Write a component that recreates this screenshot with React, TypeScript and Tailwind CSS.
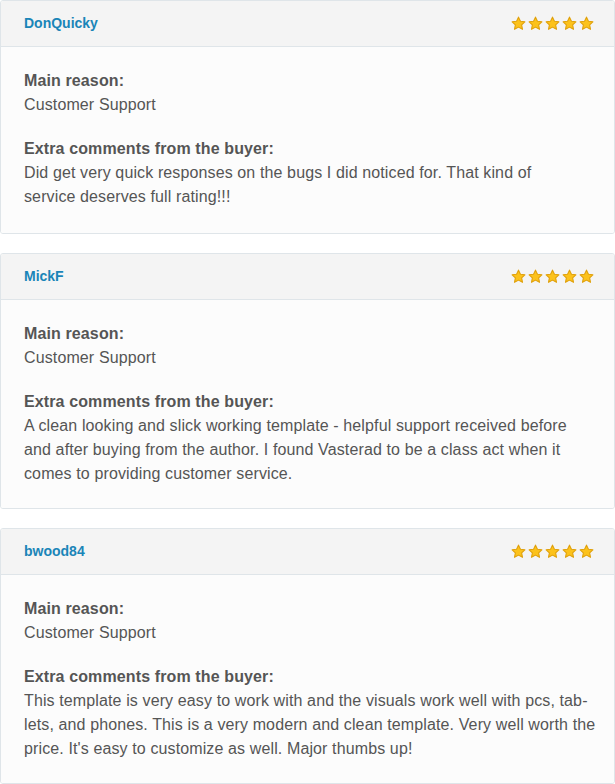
const reviews = [
  {
    name: 'DonQuicky',
    reason: 'Customer Support',
    lines: [
      'Did get very quick responses on the bugs I did noticed for. That kind of',
      'service deserves full rating!!!',
    ],
  },
  {
    name: 'MickF',
    reason: 'Customer Support',
    lines: [
      'A clean looking and slick working template - helpful support received before',
      'and after buying from the author. I found Vasterad to be a class act when it',
      'comes to providing customer service.',
    ],
  },
  {
    name: 'bwood84',
    reason: 'Customer Support',
    lines: [
      'This template is very easy to work with and the visuals work well with pcs, tab-',
      'lets, and phones. This is a very modern and clean template. Very well worth the',
      "price. It's easy to customize as well. Major thumbs up!",
    ],
  },
];

function Star() {
  return (
    <svg width="15" height="15" viewBox="0 0 24 24">
      <path
        d="M12 1.8l3.1 6.6 7.1.9-5.2 4.9 1.4 7.1L12 17.8l-6.4 3.5 1.4-7.1-5.2-4.9 7.1-.9z"
        fill="#fcc21b"
        stroke="#e0a10c"
        strokeWidth="1.8"
        strokeLinejoin="round"
      />
    </svg>
  );
}

export default function App() {
  return (
    <div className="w-[615px] bg-white flex flex-col gap-[19px]" style={{ fontFamily: '"Liberation Sans", Arial, sans-serif' }}>
      {reviews.map((r, i) => (
        <div key={r.name} className="border border-[#dfe5e9] rounded-[3px] overflow-hidden">
          <div className="h-[46px] bg-[#f4f4f4] border-b border-[#dfe5e9] flex items-center justify-between pl-[23px] pr-[20px]">
            <span className="text-[14px] font-bold text-[#1a85b8]">{r.name}</span>
            <div className="flex gap-[2px]">
              <Star />
              <Star />
              <Star />
              <Star />
              <Star />
            </div>
          </div>
          <div
            className={
              'bg-[#fcfcfc] pt-[22px] pl-[23px] pr-[20px] text-[16px] leading-[24px] text-[#555] tracking-[0.12px] ' +
              (i === 0 ? 'pb-[24px]' : 'pb-[22px]')
            }
          >
            <div className="font-bold">Main reason:</div>
            <div>{r.reason}</div>
            <div className="font-bold mt-[20px]">Extra comments from the buyer:</div>
            <p>
              {r.lines.map(line => (
                <span key={line} className="block whitespace-nowrap">
                  {line}
                </span>
              ))}
            </p>
          </div>
        </div>
      ))}
    </div>
  );
}
